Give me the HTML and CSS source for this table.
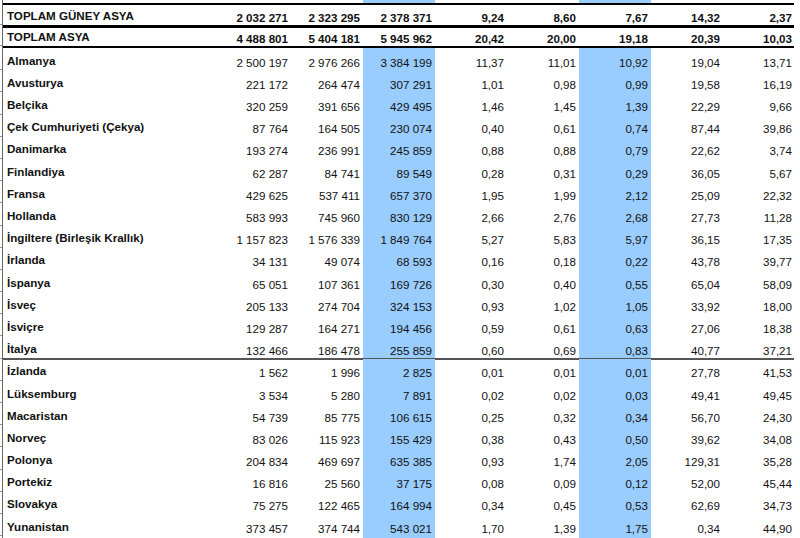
FILE: index.html
```html
<!DOCTYPE html>
<html lang="tr">
<head>
<meta charset="utf-8">
<title>Tablo</title>
<link rel="stylesheet" href="styles.css">
</head>
<body>
<div class="sheet">
  <div class="row strip"><div class="c"></div><div class="c"></div><div class="c"></div><div class="c hl"></div><div class="c"></div><div class="c"></div><div class="c hl"></div><div class="c"></div><div class="c"></div></div>
  <div class="row total first"><div class="lbl">TOPLAM GÜNEY ASYA</div><div class="n">2 032 271</div><div class="n">2 323 295</div><div class="n">2 378 371</div><div class="n">9,24</div><div class="n">8,60</div><div class="n">7,67</div><div class="n">14,32</div><div class="n">2,37</div></div>
  <div class="row total second"><div class="lbl">TOPLAM ASYA</div><div class="n">4 488 801</div><div class="n">5 404 181</div><div class="n">5 945 962</div><div class="n">20,42</div><div class="n">20,00</div><div class="n">19,18</div><div class="n">20,39</div><div class="n">10,03</div></div>
  <div class="row"><div class="lbl">Almanya</div><div class="n">2 500 197</div><div class="n">2 976 266</div><div class="n hl">3 384 199</div><div class="n">11,37</div><div class="n">11,01</div><div class="n hl">10,92</div><div class="n">19,04</div><div class="n">13,71</div></div>
  <div class="row"><div class="lbl">Avusturya</div><div class="n">221 172</div><div class="n">264 474</div><div class="n hl">307 291</div><div class="n">1,01</div><div class="n">0,98</div><div class="n hl">0,99</div><div class="n">19,58</div><div class="n">16,19</div></div>
  <div class="row"><div class="lbl">Belçika</div><div class="n">320 259</div><div class="n">391 656</div><div class="n hl">429 495</div><div class="n">1,46</div><div class="n">1,45</div><div class="n hl">1,39</div><div class="n">22,29</div><div class="n">9,66</div></div>
  <div class="row"><div class="lbl">Çek Cumhuriyeti (Çekya)</div><div class="n">87 764</div><div class="n">164 505</div><div class="n hl">230 074</div><div class="n">0,40</div><div class="n">0,61</div><div class="n hl">0,74</div><div class="n">87,44</div><div class="n">39,86</div></div>
  <div class="row"><div class="lbl">Danimarka</div><div class="n">193 274</div><div class="n">236 991</div><div class="n hl">245 859</div><div class="n">0,88</div><div class="n">0,88</div><div class="n hl">0,79</div><div class="n">22,62</div><div class="n">3,74</div></div>
  <div class="row"><div class="lbl">Finlandiya</div><div class="n">62 287</div><div class="n">84 741</div><div class="n hl">89 549</div><div class="n">0,28</div><div class="n">0,31</div><div class="n hl">0,29</div><div class="n">36,05</div><div class="n">5,67</div></div>
  <div class="row"><div class="lbl">Fransa</div><div class="n">429 625</div><div class="n">537 411</div><div class="n hl">657 370</div><div class="n">1,95</div><div class="n">1,99</div><div class="n hl">2,12</div><div class="n">25,09</div><div class="n">22,32</div></div>
  <div class="row"><div class="lbl">Hollanda</div><div class="n">583 993</div><div class="n">745 960</div><div class="n hl">830 129</div><div class="n">2,66</div><div class="n">2,76</div><div class="n hl">2,68</div><div class="n">27,73</div><div class="n">11,28</div></div>
  <div class="row"><div class="lbl">İngiltere (Birleşik Krallık)</div><div class="n">1 157 823</div><div class="n">1 576 339</div><div class="n hl">1 849 764</div><div class="n">5,27</div><div class="n">5,83</div><div class="n hl">5,97</div><div class="n">36,15</div><div class="n">17,35</div></div>
  <div class="row"><div class="lbl">İrlanda</div><div class="n">34 131</div><div class="n">49 074</div><div class="n hl">68 593</div><div class="n">0,16</div><div class="n">0,18</div><div class="n hl">0,22</div><div class="n">43,78</div><div class="n">39,77</div></div>
  <div class="row"><div class="lbl">İspanya</div><div class="n">65 051</div><div class="n">107 361</div><div class="n hl">169 726</div><div class="n">0,30</div><div class="n">0,40</div><div class="n hl">0,55</div><div class="n">65,04</div><div class="n">58,09</div></div>
  <div class="row"><div class="lbl">İsveç</div><div class="n">205 133</div><div class="n">274 704</div><div class="n hl">324 153</div><div class="n">0,93</div><div class="n">1,02</div><div class="n hl">1,05</div><div class="n">33,92</div><div class="n">18,00</div></div>
  <div class="row"><div class="lbl">İsviçre</div><div class="n">129 287</div><div class="n">164 271</div><div class="n hl">194 456</div><div class="n">0,59</div><div class="n">0,61</div><div class="n hl">0,63</div><div class="n">27,06</div><div class="n">18,38</div></div>
  <div class="row divider"><div class="lbl">İtalya</div><div class="n">132 466</div><div class="n">186 478</div><div class="n hl">255 859</div><div class="n">0,60</div><div class="n">0,69</div><div class="n hl">0,83</div><div class="n">40,77</div><div class="n">37,21</div></div>
  <div class="row"><div class="lbl">İzlanda</div><div class="n">1 562</div><div class="n">1 996</div><div class="n hl">2 825</div><div class="n">0,01</div><div class="n">0,01</div><div class="n hl">0,01</div><div class="n">27,78</div><div class="n">41,53</div></div>
  <div class="row"><div class="lbl">Lüksemburg</div><div class="n">3 534</div><div class="n">5 280</div><div class="n hl">7 891</div><div class="n">0,02</div><div class="n">0,02</div><div class="n hl">0,03</div><div class="n">49,41</div><div class="n">49,45</div></div>
  <div class="row"><div class="lbl">Macaristan</div><div class="n">54 739</div><div class="n">85 775</div><div class="n hl">106 615</div><div class="n">0,25</div><div class="n">0,32</div><div class="n hl">0,34</div><div class="n">56,70</div><div class="n">24,30</div></div>
  <div class="row"><div class="lbl">Norveç</div><div class="n">83 026</div><div class="n">115 923</div><div class="n hl">155 429</div><div class="n">0,38</div><div class="n">0,43</div><div class="n hl">0,50</div><div class="n">39,62</div><div class="n">34,08</div></div>
  <div class="row"><div class="lbl">Polonya</div><div class="n">204 834</div><div class="n">469 697</div><div class="n hl">635 385</div><div class="n">0,93</div><div class="n">1,74</div><div class="n hl">2,05</div><div class="n">129,31</div><div class="n">35,28</div></div>
  <div class="row"><div class="lbl">Portekiz</div><div class="n">16 816</div><div class="n">25 560</div><div class="n hl">37 175</div><div class="n">0,08</div><div class="n">0,09</div><div class="n hl">0,12</div><div class="n">52,00</div><div class="n">45,44</div></div>
  <div class="row"><div class="lbl">Slovakya</div><div class="n">75 275</div><div class="n">122 465</div><div class="n hl">164 994</div><div class="n">0,34</div><div class="n">0,45</div><div class="n hl">0,53</div><div class="n">62,69</div><div class="n">34,73</div></div>
  <div class="row"><div class="lbl">Yunanistan</div><div class="n">373 457</div><div class="n">374 744</div><div class="n hl">543 021</div><div class="n">1,70</div><div class="n">1,39</div><div class="n hl">1,75</div><div class="n">0,34</div><div class="n">44,90</div></div>
  <div class="row"><div class="lbl"></div><div class="n"></div><div class="n"></div><div class="n hl"></div><div class="n"></div><div class="n"></div><div class="n hl"></div><div class="n"></div><div class="n"></div></div>
</div>
</body>
</html>
```

FILE: styles.css
```css
html, body {
  margin: 0;
  padding: 0;
  background: #fff;
}
body {
  width: 800px;
  height: 538px;
  overflow: hidden;
  font-family: "Liberation Sans", Arial, sans-serif;
  font-size: 11.6px;
  line-height: 13px;
  color: #111;
}
.sheet {
  margin-left: 2px;
  width: 791px;
  border-left: 1px solid #666;
}
.row {
  position: relative;
  display: grid;
  grid-template-columns: 216px repeat(8, 72px);
  height: 22.2px;
}
.row::before {
  content: "";
  position: absolute;
  left: -3px;
  bottom: 0;
  width: 2px;
  height: 1px;
  background: #999;
}
.strip {
  height: 3px;
}
.strip::before {
  display: none;
}
.total {
  font-weight: bold;
  border-bottom: 3px solid #000;
}
.total.first {
  height: 20px;
  border-top: 2px solid #000;
}
.total.second {
  height: 18px;
  border-bottom-width: 2px;
}
.divider::after {
  content: "";
  position: absolute;
  left: 0;
  right: 0;
  bottom: -1px;
  height: 2px;
  background: #555;
}
.lbl {
  display: flex;
  align-items: flex-end;
  padding: 0 0 3.5px 4px;
  font-weight: bold;
  white-space: nowrap;
}
.n {
  display: flex;
  align-items: flex-end;
  justify-content: flex-end;
  padding: 0 3px 1.5px 0;
  white-space: nowrap;
}
.hl {
  background: #99ccff;
}
```
